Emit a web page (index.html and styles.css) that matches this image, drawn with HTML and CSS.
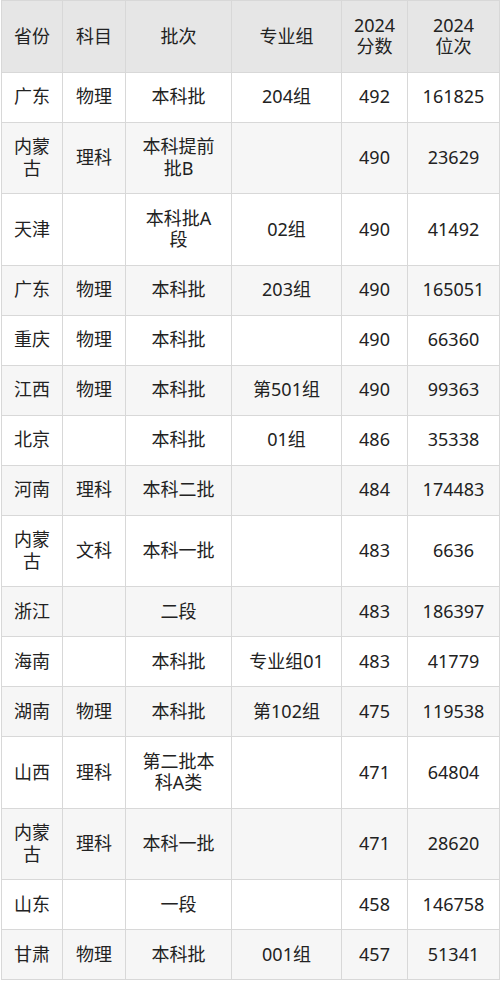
FILE: index.html
```html
<!DOCTYPE html>
<html lang="zh">
<head>
<meta charset="utf-8">
<title>分数位次</title>
<link rel="stylesheet" href="styles.css">
</head>
<body>
<table class="score-table">
  <colgroup>
    <col class="c-prov"><col class="c-subj"><col class="c-batch"><col class="c-group"><col class="c-score"><col class="c-rank">
  </colgroup>
  <thead>
    <tr><th>省份</th><th>科目</th><th>批次</th><th>专业组</th><th>2024<br>分数</th><th>2024<br>位次</th></tr>
  </thead>
  <tbody>
    <tr><td>广东</td><td>物理</td><td>本科批</td><td>204组</td><td>492</td><td>161825</td></tr>
    <tr><td>内蒙<br>古</td><td>理科</td><td>本科提前<br>批B</td><td></td><td>490</td><td>23629</td></tr>
    <tr><td>天津</td><td></td><td>本科批A<br>段</td><td>02组</td><td>490</td><td>41492</td></tr>
    <tr><td>广东</td><td>物理</td><td>本科批</td><td>203组</td><td>490</td><td>165051</td></tr>
    <tr><td>重庆</td><td>物理</td><td>本科批</td><td></td><td>490</td><td>66360</td></tr>
    <tr><td>江西</td><td>物理</td><td>本科批</td><td>第501组</td><td>490</td><td>99363</td></tr>
    <tr><td>北京</td><td></td><td>本科批</td><td>01组</td><td>486</td><td>35338</td></tr>
    <tr><td>河南</td><td>理科</td><td>本科二批</td><td></td><td>484</td><td>174483</td></tr>
    <tr><td>内蒙<br>古</td><td>文科</td><td>本科一批</td><td></td><td>483</td><td>6636</td></tr>
    <tr><td>浙江</td><td></td><td>二段</td><td></td><td>483</td><td>186397</td></tr>
    <tr><td>海南</td><td></td><td>本科批</td><td>专业组01</td><td>483</td><td>41779</td></tr>
    <tr><td>湖南</td><td>物理</td><td>本科批</td><td>第102组</td><td>475</td><td>119538</td></tr>
    <tr><td>山西</td><td>理科</td><td>第二批本<br>科A类</td><td></td><td>471</td><td>64804</td></tr>
    <tr><td>内蒙<br>古</td><td>理科</td><td>本科一批</td><td></td><td>471</td><td>28620</td></tr>
    <tr><td>山东</td><td></td><td>一段</td><td></td><td>458</td><td>146758</td></tr>
    <tr><td>甘肃</td><td>物理</td><td>本科批</td><td>001组</td><td>457</td><td>51341</td></tr>
  </tbody>
</table>
</body>
</html>
```
FILE: styles.css
```css
html, body {
  margin: 0;
  padding: 0;
  background: #ffffff;
}

body {
  font-family: "Noto Sans", "Noto Sans CJK SC", sans-serif;
  color: #222222;
}

.score-table {
  margin-left: 1px;
  border-collapse: separate;
  border-spacing: 0;
  table-layout: fixed;
  width: 499px;
  border-left: 1px solid #d8d8d8;
  border-top: 1px solid #d8d8d8;
}

.c-prov { width: 61px; }
.c-subj { width: 63px; }
.c-batch { width: 106px; }
.c-group { width: 110px; }
.c-score { width: 66px; }
.c-rank { width: 92px; }

.score-table th,
.score-table td {
  box-sizing: border-box;
  padding: 13.75px 4px;
  border-right: 1px solid #d8d8d8;
  border-bottom: 1px solid #d8d8d8;
  font-size: 18px;
  line-height: 21.5px;
  font-weight: normal;
  text-align: center;
  vertical-align: middle;
}

.score-table thead th {
  background: #e6e6e6;
}

.score-table tbody tr:nth-child(even) td {
  background: #f6f6f6;
}
```
